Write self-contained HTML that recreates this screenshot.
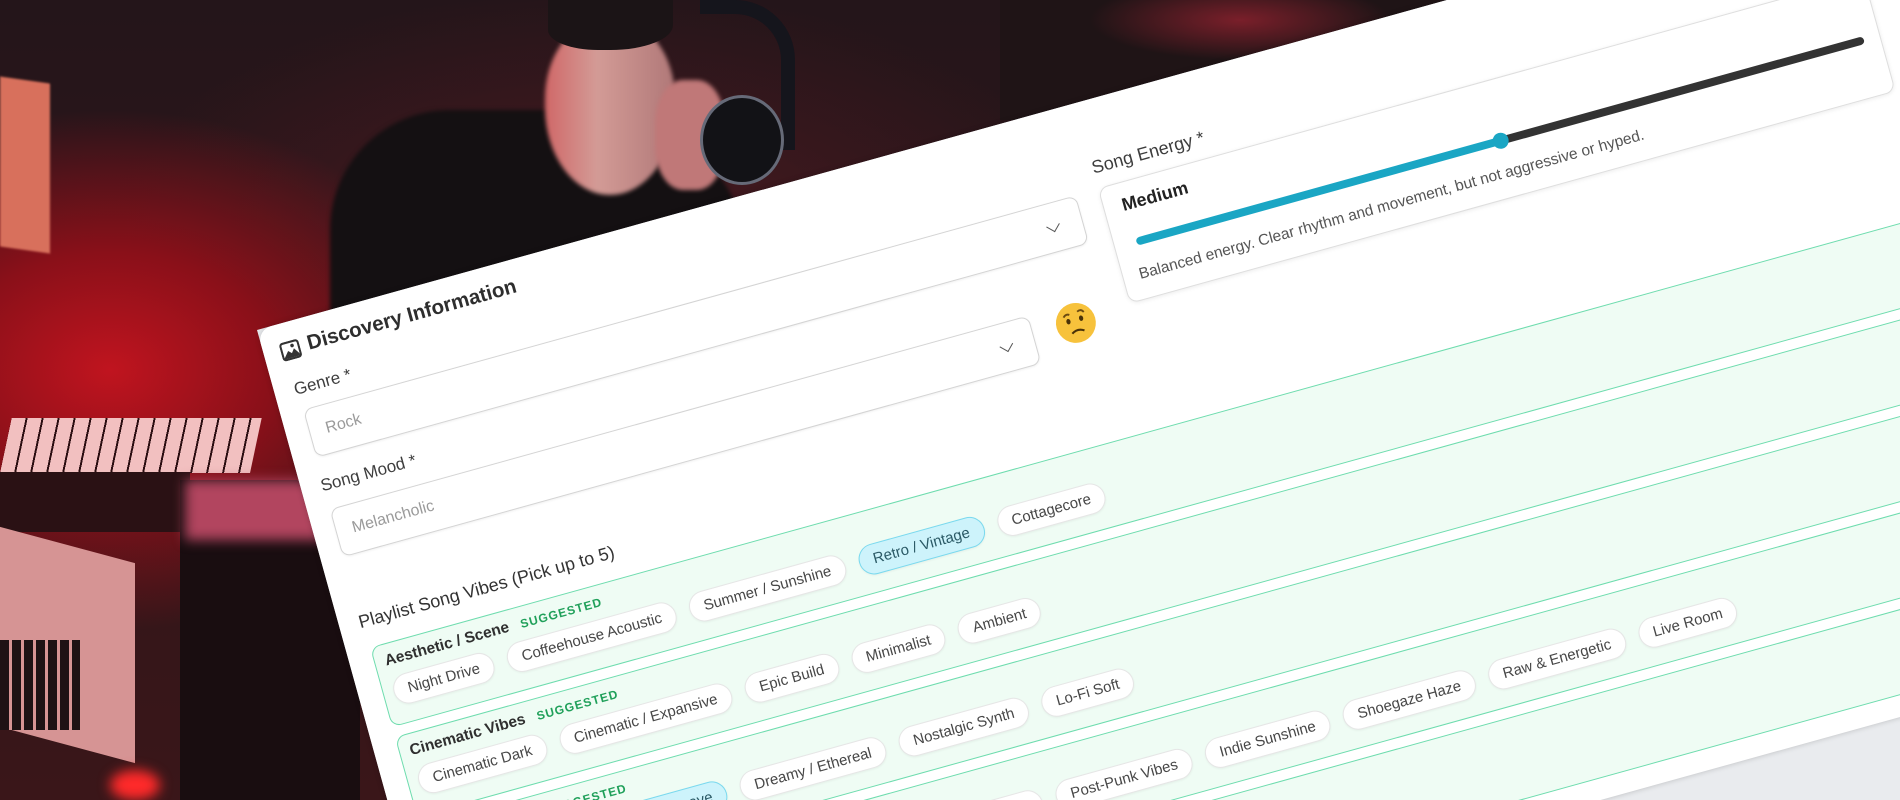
<!DOCTYPE html>
<html><head><meta charset="utf-8">
<style>
*{box-sizing:border-box;margin:0;padding:0}
html,body{width:1900px;height:800px;overflow:hidden}
body{position:relative;background:#2a1519;font-family:"Liberation Sans",sans-serif}
.bg{position:absolute}
.card{position:absolute;left:257px;top:330px;width:1690px;height:812px;transform-origin:0 0;transform:rotate(-15.5deg);background:#fff;border-radius:14px;box-shadow:0 0 6px rgba(0,0,0,.2);overflow:hidden}
.gray{position:absolute;left:257px;top:330px;width:1690px;height:1000px;transform-origin:0 0;transform:rotate(-15.5deg);background:#e9ebee}
.abs{position:absolute;white-space:nowrap}
.lbl{font-size:17px;color:#3d3d3d}
.box{position:absolute;border:1px solid #d4d4d4;border-radius:9px;background:#fff;box-shadow:0 1px 2px rgba(0,0,0,.06)}
.ph{position:absolute;left:16px;top:15px;font-size:16px;color:#9a9a9a}
.chev{position:absolute;top:17px;width:10px;height:10px;border-right:1.8px solid #555;border-bottom:1.8px solid #555;transform:rotate(45deg)}
.grp{position:absolute;left:24px;width:1625px;height:83px;background:#effcf4;border:1.5px solid #6edcae;border-radius:10px}
.gt{position:absolute;left:10px;top:8px;font-size:15.5px;font-weight:bold;color:#2f2f2f;white-space:nowrap}
.sg{font-size:12px;color:#20a05a;letter-spacing:1px;margin-left:12px}
.chips{position:absolute;left:10px;top:33px;display:flex;gap:14px;white-space:nowrap}
.chip{height:31px;line-height:29px;padding:0 14px;border:1px solid #e6e6e6;border-radius:16px;background:#fff;font-size:15px;color:#474747;box-shadow:0 1px 2px rgba(0,0,0,.05)}
.chip.on{background:#cdf3fb;border-color:#7ad9ee;color:#2b5a66}
</style></head><body>
<div class="bg" style="left:0;top:0;width:1900px;height:800px;background:radial-gradient(ellipse 360px 260px at 110px 370px,#c0141f 0%,#8a1019 45%,rgba(60,16,22,0) 100%),radial-gradient(ellipse 500px 260px at 600px 250px,#4a1a20 0%,rgba(40,18,22,0) 100%),linear-gradient(#24151a,#3a1619)"></div>
<div class="bg" style="left:0;top:80px;width:50px;height:170px;background:#d8705c;transform:skewY(8deg);filter:blur(1px)"></div>
<div class="bg" style="left:330px;top:110px;width:420px;height:300px;background:#141012;border-radius:120px 160px 0 0;filter:blur(2px)"></div>
<div class="bg" style="left:545px;top:20px;width:130px;height:175px;background:linear-gradient(90deg,#d06868,#d39b96 40%,#b07878);border-radius:45% 45% 50% 50%;filter:blur(2px)"></div>
<div class="bg" style="left:548px;top:0px;width:125px;height:50px;background:#1b1416;border-radius:0 0 50% 40%"></div>
<div class="bg" style="left:655px;top:80px;width:70px;height:110px;background:#c07878;border-radius:40%;filter:blur(2px)"></div>
<div class="bg" style="left:700px;top:0px;width:95px;height:150px;border:14px solid #15151c;border-bottom:none;border-left:none;border-radius:0 60px 0 0"></div>
<div class="bg" style="left:700px;top:95px;width:84px;height:90px;background:#121216;border-radius:50%;border:3px solid #666a78"></div>
<div class="bg" style="left:1000px;top:0;width:450px;height:120px;background:radial-gradient(ellipse 150px 40px at 240px 20px,#7a1f2a,rgba(0,0,0,0)),#1f1416"></div>
<div class="bg" style="left:0;top:418px;width:250px;height:55px;background:repeating-linear-gradient(90deg,#f2c0c0 0 14px,#2a0d10 14px 16px);transform:skewX(-12deg);transform-origin:0 100%"></div>
<div class="bg" style="left:0;top:472px;width:190px;height:60px;background:#2a1114"></div>
<div class="bg" style="left:0;top:545px;width:135px;height:200px;background:#d69494;transform:skewY(15deg)"></div>
<div class="bg" style="left:0;top:640px;width:80px;height:90px;background:repeating-linear-gradient(90deg,#1e1214 0 9px,#d69494 9px 12px)"></div>
<div class="bg" style="left:180px;top:480px;width:180px;height:320px;background:#190d10"></div>
<div class="bg" style="left:185px;top:480px;width:200px;height:60px;background:#b2455f;filter:blur(6px)"></div>
<div class="bg" style="left:110px;top:770px;width:50px;height:30px;background:#ff2a2a;border-radius:50%;filter:blur(6px)"></div>

<div class="gray"></div>
<div class="card">
  <svg class="abs" style="left:17px;top:19px" width="20" height="19" viewBox="0 0 19 18"><rect x="1" y="1" width="17" height="16" rx="2.5" fill="none" stroke="#333" stroke-width="2"/><path d="M2 15 L7 9 L10 12 L13 8 L17 14 L17 16 L2 16Z" fill="#333"/><circle cx="12" cy="5" r="1.7" fill="#333"/></svg>
  <div class="abs" style="left:45px;top:15px;font-size:20.5px;font-weight:bold;color:#2e2e2e">Discovery Information</div>

  <div class="abs lbl" style="left:20px;top:58px">Genre *</div>
  <div class="box" style="left:23px;top:89px;width:802px;height:50px"><div class="ph">Rock</div><div class="chev" style="left:766px"></div></div>

  <div class="abs lbl" style="left:20px;top:158px">Song Mood *</div>
  <div class="box" style="left:22px;top:192px;width:725px;height:50px"><div class="ph">Melancholic</div><div class="chev" style="left:690px"></div></div>
  <svg class="abs" style="left:770px;top:191px" width="42" height="42" viewBox="0 0 40 40"><circle cx="20" cy="20" r="19" fill="#f7c23c"/><path d="M10 12 Q13 9 16 11" stroke="#6b4a10" stroke-width="1.8" fill="none"/><path d="M24 10 Q28 8 30 12" stroke="#6b4a10" stroke-width="1.8" fill="none"/><ellipse cx="13.5" cy="17" rx="2" ry="2.6" fill="#4a3208"/><ellipse cx="26" cy="17" rx="2" ry="2.6" fill="#4a3208"/><path d="M14 29 Q20 25 26 29" stroke="#4a3208" stroke-width="2" fill="none"/></svg>

  <div class="abs lbl" style="left:848px;top:57px;font-size:18px">Song Energy *</div>
  <div class="box" style="left:848px;top:88px;width:795px;height:120px;border-radius:10px;border-color:#dedede;box-shadow:0 1px 4px rgba(0,0,0,.08)">
    <div class="abs" style="left:18px;top:12px;font-size:18px;font-weight:bold;color:#222">Medium</div>
    <div class="abs" style="left:22px;top:57px;width:755px;height:8px;border-radius:4px;background:linear-gradient(90deg,#1aa6c4 0 50%,#333 50% 100%)"></div>
    <div class="abs" style="left:392px;top:53px;width:16px;height:16px;border-radius:50%;background:#1aa6c4"></div>
    <div class="abs" style="left:16px;top:85px;font-size:15.5px;color:#555">Balanced energy. Clear rhythm and movement, but not aggressive or hyped.</div>
  </div>

  <div class="abs" style="left:20px;top:299px;font-size:18px;color:#333">Playlist Song Vibes (Pick up to 5)</div>

  <div class="grp" style="top:336px"><div class="gt">Aesthetic / Scene<span class="sg">SUGGESTED</span></div>
    <div class="chips"><span class="chip">Night Drive</span><span class="chip">Coffeehouse Acoustic</span><span class="chip">Summer / Sunshine</span><span class="chip on">Retro / Vintage</span><span class="chip">Cottagecore</span></div></div>
  <div class="grp" style="top:429px"><div class="gt">Cinematic Vibes<span class="sg">SUGGESTED</span></div>
    <div class="chips"><span class="chip">Cinematic Dark</span><span class="chip">Cinematic / Expansive</span><span class="chip">Epic Build</span><span class="chip">Minimalist</span><span class="chip">Ambient</span></div></div>
  <div class="grp" style="top:522px"><div class="gt">Dreamy Vibes<span class="sg">SUGGESTED</span></div>
    <div class="chips"><span class="chip" style="margin-left:55px">Bedroom Pop</span><span class="chip on">Synthwave</span><span class="chip">Dreamy / Ethereal</span><span class="chip">Nostalgic Synth</span><span class="chip">Lo-Fi Soft</span></div></div>
  <div class="grp" style="top:615px"><div class="gt">Genre Vibes<span class="sg">SUGGESTED</span></div>
    <div class="chips"><span class="chip" style="margin-left:100px">Garage Rock</span><span class="chip">Grunge Revival</span><span class="chip">Classic Rock</span><span class="chip">Alt Rock</span><span class="chip">Post-Punk Vibes</span><span class="chip">Indie Sunshine</span><span class="chip">Shoegaze Haze</span><span class="chip">Raw &amp; Energetic</span><span class="chip">Live Room</span></div></div>
  <div class="grp" style="top:708px"><div class="gt">Mood Vibes</div>
    <div class="chips"><span class="chip">Heartbreak</span><span class="chip">Rainy Day</span></div></div>
</div>
</body></html>
